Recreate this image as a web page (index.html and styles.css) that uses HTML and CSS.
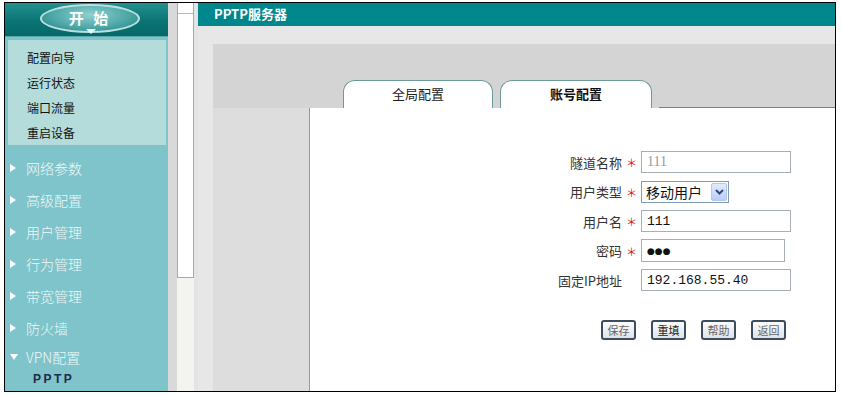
FILE: index.html
```html
<!DOCTYPE html>
<html lang="zh-CN">
<head>
  <meta charset="UTF-8">
  <meta name="viewport" content="width=device-width, initial-scale=1.0">
  <title>PPTP服务器</title>
  <link rel="stylesheet" href="styles.css">
</head>
<body>
  <div class="frame">
    <aside class="sidebar">
      <div class="side-head">
        <div class="start-btn">开 始<span class="start-arrow"></span></div>
      </div>
      <ul class="quick-menu">
        <li>配置向导</li>
        <li>运行状态</li>
        <li>端口流量</li>
        <li>重启设备</li>
      </ul>
      <ul class="main-menu">
        <li><span class="tri"></span>网络参数</li>
        <li><span class="tri"></span>高级配置</li>
        <li><span class="tri"></span>用户管理</li>
        <li><span class="tri"></span>行为管理</li>
        <li><span class="tri"></span>带宽管理</li>
        <li><span class="tri"></span>防火墙</li>
        <li class="open"><span class="tri down"></span>VPN配置</li>
        <li class="sub">PPTP</li>
      </ul>
    </aside>

    <div class="scroll-col">
      <div class="scroll-thumb"></div>
    </div>

    <main class="main">
      <div class="page-title">PPTP服务器</div>
      <div class="page-body">
        <div class="panel">
          <div class="tabs">
            <div class="tab">全局配置</div>
            <div class="tab active">账号配置</div>
            <div class="tab-fill"></div>
          </div>
          <div class="panel-content">
            <div class="panel-side"></div>
            <div class="content">
              <form class="account-form" onsubmit="return false;">
                <label class="lbl">隧道名称</label>
                <span class="star">＊</span>
                <input class="field disabled" type="text" value="111" readonly>

                <label class="lbl">用户类型</label>
                <span class="star">＊</span>
                <div class="fake-select">
                  <span class="sel-text">移动用户</span>
                  <span class="sel-btn">
                    <svg width="9" height="6" viewBox="0 0 9 6"><path d="M1 1 L4.5 4.5 L8 1" fill="none" stroke="#2a4c8c" stroke-width="2"/></svg>
                  </span>
                </div>

                <label class="lbl">用户名</label>
                <span class="star">＊</span>
                <input class="field" type="text" value="111" readonly>

                <label class="lbl">密码</label>
                <span class="star">＊</span>
                <input class="field pwd" type="text" value="●●●" readonly>

                <label class="lbl">固定IP地址</label>
                <span class="star"></span>
                <input class="field" type="text" value="192.168.55.40" readonly>
              </form>

              <div class="btn-row">
                <button type="button" class="btn">保存</button>
                <button type="button" class="btn dark">重填</button>
                <button type="button" class="btn">帮助</button>
                <button type="button" class="btn">返回</button>
              </div>
            </div>
          </div>
        </div>
      </div>
    </main>
  </div>
</body>
</html>
```

FILE: styles.css
```css
body {
  margin: 0;
  padding: 0;
  background: #fff;
  font-family: "Noto Sans CJK SC", "Liberation Sans", sans-serif;
  font-size: 12px;
}
.frame {
  margin: 2px 0 0 4px;
  width: 830px;
  height: 388px;
  border: 1px solid #000;
  display: flex;
  overflow: hidden;
}

/* sidebar */
.sidebar {
  width: 163px;
  flex-shrink: 0;
  background: #7ec4ca;
}
.side-head {
  height: 34px;
  background: linear-gradient(180deg, #23918f 0%, #0a7474 55%, #066868 100%);
  border-bottom: 1px solid #5aa9aa;
  padding-top: 1px;
  box-sizing: border-box;
}
.start-btn {
  position: relative;
  margin-left: 35px;
  width: 100px;
  height: 29px;
  box-sizing: border-box;
  border: 2px solid #b9e0df;
  border-radius: 50%;
  background: radial-gradient(ellipse at 50% 35%, #8fd0cf 0%, #4ea8a8 55%, #1b7f80 100%);
  color: #fff;
  font-weight: bold;
  font-size: 15px;
  line-height: 23px;
  text-align: center;
  letter-spacing: 3px;
}
.start-arrow {
  position: absolute;
  left: 44px;
  bottom: -3px;
  width: 0;
  height: 0;
  border-left: 5px solid transparent;
  border-right: 5px solid transparent;
  border-top: 5px solid #e8f6f6;
}
.quick-menu {
  list-style: none;
  margin: 3px 2px 0 3px;
  padding: 5px 0 0 19px;
  background: #b4dcdb;
  height: 105px;
  box-sizing: border-box;
}
.quick-menu li {
  height: 25px;
  line-height: 25px;
  color: #111;
  font-size: 12px;
}
.main-menu {
  list-style: none;
  margin: 7px 0 0 0;
  padding: 0 0 0 5px;
}
.main-menu li {
  height: 32px;
  line-height: 32px;
  color: #eef8f8;
  font-size: 14px;
  font-weight: 300;
  display: flex;
  align-items: center;
}
.main-menu .tri {
  width: 0;
  height: 0;
  border-top: 4px solid transparent;
  border-bottom: 4px solid transparent;
  border-left: 6px solid #fff;
  margin-right: 10px;
}
.main-menu .tri.down {
  border-left: 4px solid transparent;
  border-right: 4px solid transparent;
  border-top: 6px solid #fff;
  border-bottom: 0;
  margin-right: 8px;
}
.main-menu li.open {
  height: 26px;
  line-height: 26px;
}
.main-menu li.sub {
  height: 18px;
  line-height: 18px;
  padding-left: 23px;
  font-family: "Liberation Sans", sans-serif;
  font-weight: bold;
  font-size: 12px;
  letter-spacing: 2.5px;
  color: #1e2a4e;
}

/* scroll column */
.scroll-col {
  width: 30px;
  flex-shrink: 0;
  background: linear-gradient(90deg, #d9d9d9 0, #d9d9d9 9px, #f3f3ef 9px, #f3f3ef 26px, #e4e4e4 26px);
}
.scroll-thumb {
  margin-left: 9px;
  width: 17px;
  height: 275px;
  box-sizing: border-box;
  background: #fff;
  border: 1px solid #a9a9a9;
  border-top: 0;
}
.scroll-thumb::before {
  content: "";
  display: block;
  height: 10px;
  border-bottom: 1px solid #b8b8b8;
}

/* main */
.main {
  flex: 1;
  display: flex;
  flex-direction: column;
}
.page-title {
  height: 23px;
  line-height: 21px;
  background: #00878b;
  color: #fff;
  font-weight: bold;
  font-size: 13px;
  padding-left: 16px;
}
.page-body {
  flex: 1;
  background: #e7e7e7;
  padding: 18px 0 0 15px;
  display: flex;
}
.panel {
  flex: 1;
  background: #d4d4d4;
  padding-top: 36px;
  display: flex;
  flex-direction: column;
}
.tabs {
  display: flex;
  height: 28px;
  padding-left: 130px;
  gap: 7px;
}
.tab {
  width: 150px;
  height: 28px;
  box-sizing: border-box;
  background: #fff;
  border: 1px solid #6c9a9a;
  border-bottom: 0;
  border-radius: 12px 12px 0 0;
  text-align: center;
  line-height: 26px;
  font-size: 13px;
  color: #222;
}
.tab.active {
  width: 152px;
  font-weight: bold;
  color: #111;
}
.tab-fill {
  flex: 1;
  border-bottom: 1px solid #5f8c8c;
}
.panel-content {
  flex: 1;
  display: flex;
}
.panel-side {
  width: 96px;
  background: #dddddd;
}
.content {
  flex: 1;
  background: #fff;
  border-left: 1px solid #7aa5a5;
  padding-top: 43px;
}

/* form */
.account-form {
  margin: 0 0 0 226px;
  display: grid;
  grid-template-columns: 86px 19px auto;
  grid-auto-rows: 22px;
  row-gap: 7.5px;
  align-items: center;
}
.lbl {
  text-align: right;
  font-size: 13px;
  color: #333;
}
.star {
  color: #e01010;
  font-size: 11px;
  line-height: 22px;
  padding-left: 4px;
}
.field {
  width: 150px;
  height: 22px;
  box-sizing: border-box;
  border: 1px solid #a7aeb6;
  padding: 0 0 0 5px;
  font-family: "Liberation Mono", monospace;
  font-size: 13px;
  color: #111;
  outline: none;
}
.field.disabled {
  font-family: "Liberation Serif", serif;
  font-size: 14px;
  color: #9a9a9a;
}
.field.pwd {
  width: 144px;
  height: 23px;
  font-family: "DejaVu Sans", sans-serif;
  font-size: 9px;
  letter-spacing: 0;
}
.fake-select {
  width: 88px;
  height: 22px;
  box-sizing: border-box;
  border: 1px solid #7f9db9;
  display: flex;
  align-items: center;
  justify-content: space-between;
  padding: 0 1px 0 4px;
}
.sel-text {
  font-size: 14px;
  color: #111;
}
.sel-btn {
  width: 16px;
  height: 18px;
  box-sizing: border-box;
  border: 1px solid #b3c6ee;
  border-radius: 2px;
  background: linear-gradient(180deg, #e3ecfd, #b9cdf4);
  display: flex;
  align-items: center;
  justify-content: center;
}

.btn-row {
  display: flex;
  gap: 15px;
  padding-left: 291px;
  margin-top: 29px;
}
.btn {
  width: 35px;
  height: 20px;
  box-sizing: border-box;
  padding: 0;
  border: 2px solid #3d4c5e;
  border-radius: 3px;
  background: linear-gradient(180deg, #fbfbfb, #dfe3e8);
  font-family: "Noto Sans CJK SC", sans-serif;
  font-size: 11px;
  line-height: 16px;
  color: #666;
  cursor: pointer;
}
.btn.dark {
  color: #222;
}
```
